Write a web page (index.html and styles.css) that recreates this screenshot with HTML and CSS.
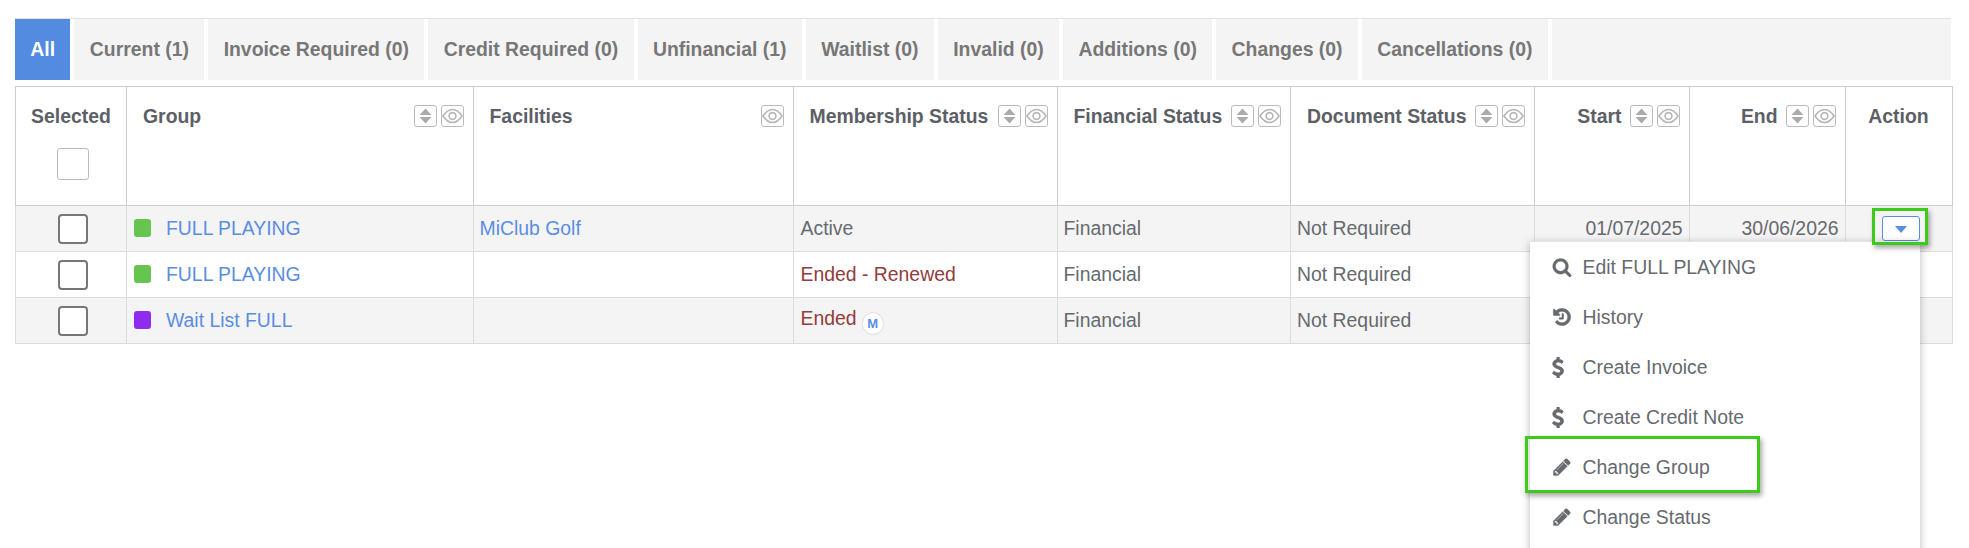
FILE: index.html
```html
<!DOCTYPE html>
<html lang="en">
  <head>
    <meta charset="UTF-8" />
    <meta name="viewport" content="width=device-width, initial-scale=1.0" />
    <title>Memberships</title>
    <link rel="stylesheet" href="styles.css">
  </head>
  <body>
    <svg class="defs" width="0" height="0">
      <symbol id="i-sort" viewBox="0 0 21 20">
        <path d="M10.5 2.5L16.5 9H4.5z M4.5 11H16.5L10.5 17.5z" fill="#a9abae" />
      </symbol>
      <symbol id="i-eye" viewBox="0 0 21 20">
        <path d="M1 10C4 5.500 7 3.500 10.500 3.500S17 5.500 20 10C17 14.500 14 16.500 10.500 16.500S4 14.500 1 10z" fill="none" stroke="#b4b6b9" stroke-width="1.600" />
        <circle cx="10.500" cy="10" r="3.400" fill="none" stroke="#b4b6b9" stroke-width="1.600" />
      </symbol>
      <symbol id="i-search" viewBox="0 0 1792 1792">
        <path d="M1216 832q0-185-131.500-316.500t-316.500-131.500-316.500 131.500-131.500 316.500 131.500 316.500 316.500 131.500 316.500-131.500 131.500-316.500zm512 832q0 52-38 90t-90 38q-54 0-90-38l-343-342q-179 124-399 124-143 0-273.500-55.500t-225-150-150-225-55.500-273.500 55.500-273.500 150-225 225-150 273.500-55.500 273.500 55.500 225 150 150 225 55.500 273.500q0 220-124 399l343 343q37 37 37 90z" />
      </symbol>
      <symbol id="i-history" viewBox="0 0 1792 1792">
        <path d="M1664 896q0 156-61 298t-164 245-245 164-298 61q-172 0-327-72.500t-264-204.500q-7-10-6.500-22.500t8.500-20.500l137-138q10-9 25-9 16 2 23 12 73 95 179 147t225 52q104 0 198.500-40.500t163.500-109.500 109.500-163.500 40.500-198.500-40.500-198.500-109.500-163.500-163.500-109.500-198.500-40.500q-98 0-188 35.500t-160 101.500l137 138q31 30 14 69-17 40-59 40h-448q-26 0-45-19t-19-45v-448q0-42 40-59 39-17 69 14l130 129q107-101 244.500-156.500t284.500-55.500q156 0 298 61t245 164 164 245 61 298zm-640-288v448q0 14-9 23t-23 9h-320q-14 0-23-9t-9-23v-64q0-14 9-23t23-9h224v-352q0-14 9-23t23-9h64q14 0 23 9t9 23z" />
      </symbol>
      <symbol id="i-dollar" viewBox="0 0 1024 1792">
        <path d="M978 1185q0 153-99.500 263.500t-258.500 136.500v175q0 14-9 23t-23 9h-135q-13 0-22.500-9.500t-9.500-22.500v-175q-66-9-127.500-31t-101.500-44.500-74-48-46.500-37.500-17.500-18q-17-21-2-41l103-135q7-10 23-12 15-2 24 9l2 2q113 99 243 125 37 8 74 8 81 0 142.500-43t61.500-122q0-28-15-53t-33.500-42-58.500-37.500-66-32-80-32.500q-39-16-61.500-25t-61.500-26.500-62.500-31-56.500-35.500-53.500-42.500-43.500-49-35.500-58-21-66.500-8.500-78q0-138 98-242t255-134v-180q0-13 9.500-22.500t22.500-9.500h135q14 0 23 9t9 23v176q57 6 110.500 23t87 33.500 63.500 37.500 39 29 15 14q17 18 5 38l-81 146q-8 15-23 16-14 3-27-7-3-3-14.500-12t-39-26.500-58.500-32-74.500-26-85.500-11.500q-95 0-155 43t-60 111q0 26 8.500 48t29.500 41.500 39.500 33 56 31 60.500 27 70 27.500q53 20 81 31.500t76 35 75.500 42.500 62 50 53 63.500 31.500 76.500 13 94z" />
      </symbol>
      <symbol id="i-pencil" viewBox="0 0 1792 1792">
        <path d="M491 1536l91-91-235-235-91 91v107h128v128h107zm523-928q0-22-22-22-10 0-17 7l-542 542q-7 7-7 17 0 22 22 22 10 0 17-7l542-542q7-7 7-17zm-54-192l416 416-832 832h-416v-416zm683 96q0 53-37 90l-166 166-416-416 166-165q36-38 90-38 53 0 91 38l235 234q37 39 37 91z" />
      </symbol>
    </svg>

    <div class="page">
      <div class="tabs">
        <a class="tab tab-active">All</a>
        <a class="tab">Current (1)</a>
        <a class="tab">Invoice Required (0)</a>
        <a class="tab">Credit Required (0)</a>
        <a class="tab">Unfinancial (1)</a>
        <a class="tab">Waitlist (0)</a>
        <a class="tab">Invalid (0)</a>
        <a class="tab">Additions (0)</a>
        <a class="tab">Changes (0)</a>
        <a class="tab">Cancellations (0)</a>
        <div class="tab-rest"></div>
      </div>

      <table class="grid">
        <colgroup>
          <col class="col-selected">
          <col class="col-group">
          <col class="col-facilities">
          <col class="col-membership">
          <col class="col-financial">
          <col class="col-document">
          <col class="col-start">
          <col class="col-end">
          <col class="col-action">
        </colgroup>
        <thead>
          <tr>
            <th class="th-center">
              Selected
              <div class="check-all"></div>
            </th>
            <th>
              <div class="th-row th-spread">
                <span>Group</span>
                <span class="th-tools">
                  <span class="tool"><svg><use href="#i-sort" /></svg></span>
                  <span class="tool"><svg><use href="#i-eye" /></svg></span>
                </span>
              </div>
            </th>
            <th>
              <div class="th-row th-spread">
                <span>Facilities</span>
                <span class="th-tools">
                  <span class="tool"><svg><use href="#i-eye" /></svg></span>
                </span>
              </div>
            </th>
            <th>
              <div class="th-row th-spread">
                <span>Membership Status</span>
                <span class="th-tools">
                  <span class="tool"><svg><use href="#i-sort" /></svg></span>
                  <span class="tool"><svg><use href="#i-eye" /></svg></span>
                </span>
              </div>
            </th>
            <th>
              <div class="th-row th-spread">
                <span>Financial Status</span>
                <span class="th-tools">
                  <span class="tool"><svg><use href="#i-sort" /></svg></span>
                  <span class="tool"><svg><use href="#i-eye" /></svg></span>
                </span>
              </div>
            </th>
            <th>
              <div class="th-row th-spread">
                <span>Document Status</span>
                <span class="th-tools">
                  <span class="tool"><svg><use href="#i-sort" /></svg></span>
                  <span class="tool"><svg><use href="#i-eye" /></svg></span>
                </span>
              </div>
            </th>
            <th>
              <div class="th-row th-right">
                <span>Start</span>
                <span class="th-tools">
                  <span class="tool"><svg><use href="#i-sort" /></svg></span>
                  <span class="tool"><svg><use href="#i-eye" /></svg></span>
                </span>
              </div>
            </th>
            <th>
              <div class="th-row th-right">
                <span>End</span>
                <span class="th-tools">
                  <span class="tool"><svg><use href="#i-sort" /></svg></span>
                  <span class="tool"><svg><use href="#i-eye" /></svg></span>
                </span>
              </div>
            </th>
            <th class="th-center">Action</th>
          </tr>
        </thead>
        <tbody>
          <tr class="row-alt">
            <td class="td-check"><div class="check"></div></td>
            <td><span class="swatch swatch-green"></span><a class="link">FULL PLAYING</a></td>
            <td><a class="link">MiClub Golf</a></td>
            <td class="td-status">Active</td>
            <td>Financial</td>
            <td>Not Required</td>
            <td class="td-right">01/07/2025</td>
            <td class="td-right">30/06/2026</td>
            <td class="td-action">
              <span class="action-wrap">
                <span class="mark mark-button"></span>
                <button class="action-button"><span class="caret"></span></button>
              </span>
              <ul class="menu">
                <li class="menu-item"><span class="menu-icon"><svg class="icon-search"><use href="#i-search" /></svg></span>Edit FULL PLAYING</li>
                <li class="menu-item"><span class="menu-icon"><svg class="icon-history"><use href="#i-history" /></svg></span>History</li>
                <li class="menu-item"><span class="menu-icon"><svg class="icon-dollar"><use href="#i-dollar" /></svg></span>Create Invoice</li>
                <li class="menu-item"><span class="menu-icon"><svg class="icon-dollar"><use href="#i-dollar" /></svg></span>Create Credit Note</li>
                <li class="menu-item">
                  <span class="mark mark-item"></span>
                  <span class="menu-icon"><svg class="icon-pencil"><use href="#i-pencil" /></svg></span>Change Group
                </li>
                <li class="menu-item"><span class="menu-icon"><svg class="icon-pencil"><use href="#i-pencil" /></svg></span>Change Status</li>
              </ul>
            </td>
          </tr>
          <tr>
            <td class="td-check"><div class="check"></div></td>
            <td><span class="swatch swatch-green"></span><a class="link">FULL PLAYING</a></td>
            <td></td>
            <td class="td-status ended">Ended - Renewed</td>
            <td>Financial</td>
            <td>Not Required</td>
            <td class="td-right"></td>
            <td class="td-right"></td>
            <td></td>
          </tr>
          <tr class="row-alt">
            <td class="td-check"><div class="check"></div></td>
            <td><span class="swatch swatch-purple"></span><a class="link">Wait List FULL</a></td>
            <td></td>
            <td class="td-status ended">Ended<span class="badge">M</span></td>
            <td>Financial</td>
            <td>Not Required</td>
            <td class="td-right"></td>
            <td class="td-right"></td>
            <td></td>
          </tr>
        </tbody>
      </table>
    </div>
  </body>
</html>
```

FILE: styles.css
```css
html,
body {
  height: 100%;
  overflow: hidden;
}
body {
  margin: 0;
  background-color: #fff;
  color: #666a6f;
  font-family: 'Liberation Sans', Arial, sans-serif;
  font-size: 19.4px;
}
.defs {
  position: absolute;
}
.page {
  width: 1936px;
  padding: 18px 0 0 15px;
}

/* tabs */
.tabs {
  display: flex;
  gap: 4px;
  height: 61px;
  border-top: 1px solid #e2e2e2;
  margin-bottom: 6px;
}
.tab {
  display: flex;
  align-items: center;
  padding: 0 15.35px;
  background-color: #f4f4f4;
  color: #777;
  font-weight: bold;
  font-size: 19.4px;
}
.tab-active {
  background-color: #528be0;
  color: #fff;
}
.tab-rest {
  flex: 1;
  background-color: #f4f4f4;
  border-top-right-radius: 3px;
}

/* table */
.grid {
  width: 1936px;
  table-layout: fixed;
  border-collapse: collapse;
}
.col-selected { width: 111px; }
.col-group { width: 346.5px; }
.col-facilities { width: 320px; }
.col-membership { width: 264px; }
.col-financial { width: 233.5px; }
.col-document { width: 244px; }
.col-start { width: 154.5px; }
.col-end { width: 156px; }
.col-action { width: 107px; }

.grid th {
  height: 119px;
  padding: 18px 9px 0 16px;
  border: 1px solid #cdcdd2;
  box-sizing: border-box;
  vertical-align: top;
  text-align: left;
  color: #5c6066;
  font-weight: bold;
  font-size: 19.4px;
  line-height: 22px;
}
.grid th.th-center {
  padding-left: 0;
  padding-right: 0;
  text-align: center;
}
.th-row {
  display: flex;
  align-items: center;
}
.th-spread {
  justify-content: space-between;
}
.th-right {
  justify-content: flex-end;
  gap: 8px;
}
.th-tools {
  display: flex;
  gap: 4px;
}
.tool {
  display: block;
  width: 23px;
  height: 22px;
  border: 1px solid #bbb;
  border-radius: 3px;
  box-sizing: border-box;
}
.tool svg {
  display: block;
  width: 100%;
  height: 100%;
}
.check-all {
  width: 32px;
  height: 32px;
  margin: 21px 0 0 41px;
  border: 1px solid #bbb;
  border-radius: 3px;
  box-sizing: border-box;
}
.grid td {
  height: 46px;
  padding: 0 6px;
  border: 1px solid #dcdcdc;
  box-sizing: border-box;
  vertical-align: middle;
}
.grid td.td-check {
  padding-left: 9px;
}
.grid td.td-status {
  padding-left: 7px;
}
.grid tbody tr:first-child td {
  border-top-color: #cdcdd2;
}
.row-alt td {
  background-color: #f4f4f4;
}
.check {
  width: 30px;
  height: 30px;
  margin: 0 auto;
  background-color: #fff;
  border: 2px solid #777;
  border-radius: 4px;
  box-sizing: border-box;
}
.swatch {
  display: inline-block;
  width: 17px;
  height: 18px;
  margin: 0 15px 0 1px;
  border-radius: 3px;
  vertical-align: -2px;
}
.swatch-green { background-color: #66c54e; }
.swatch-purple { background-color: #8e2bef; }
.link {
  color: #5a8de2;
}
.ended {
  color: #923c3c;
}
.badge {
  display: inline-block;
  width: 22px;
  height: 23px;
  margin-left: 5px;
  background-color: #fff;
  border: 1px solid #e2e2e2;
  border-radius: 50%;
  box-sizing: border-box;
  color: #5a8de2;
  font-size: 13px;
  font-weight: bold;
  line-height: 21px;
  text-align: center;
  vertical-align: -3px;
}
.td-right {
  text-align: right;
}

/* action menu */
.grid td.td-action {
  position: relative;
  padding: 0 0 0 36px;
}
.action-wrap {
  position: relative;
  display: block;
  width: 38px;
  height: 25px;
}
.action-button {
  display: flex;
  align-items: center;
  justify-content: center;
  width: 38px;
  height: 25px;
  padding: 0;
  background-color: #fff;
  border: 1px solid #5a8de2;
  border-radius: 3px;
  box-sizing: border-box;
}
.caret {
  width: 0;
  height: 0;
  margin-top: 2px;
  border-left: 6px solid transparent;
  border-right: 6px solid transparent;
  border-top: 7px solid #5a8de2;
}
.mark {
  position: absolute;
  z-index: 3;
  border: 3px solid #3ccb1a;
  box-sizing: border-box;
  box-shadow: 2px 3px 5px rgba(0, 0, 0, 0.35);
  pointer-events: none;
}
.mark-button {
  top: -8px;
  left: -10px;
  width: 56px;
  height: 37px;
}
.mark-item {
  top: -6px;
  left: -5px;
  width: 235px;
  height: 57px;
}
.menu {
  position: absolute;
  z-index: 2;
  top: 35px;
  right: 32px;
  width: 390px;
  margin: 0;
  padding: 0 0 40px;
  list-style: none;
  background-color: #fff;
  box-sizing: border-box;
  border-top: 1px solid #e4e4e4;
  box-shadow: 0 2px 8px rgba(0, 0, 0, 0.28);
  color: #666a6f;
}
.menu-item {
  position: relative;
  display: flex;
  align-items: center;
  height: 50px;
}
.menu-icon {
  display: flex;
  align-items: center;
  width: 31px;
  margin-left: 22px;
  flex-shrink: 0;
  fill: #666a6f;
  stroke: #666a6f;
}
.menu-icon svg {
  overflow: visible;
}
.icon-search { width: 20px; height: 20px; stroke-width: 30; }
.icon-history { width: 20px; height: 20px; stroke-width: 50; }
.icon-dollar { width: 12px; height: 21px; stroke-width: 70; }
.icon-pencil { width: 20px; height: 20px; stroke-width: 30; }
```
